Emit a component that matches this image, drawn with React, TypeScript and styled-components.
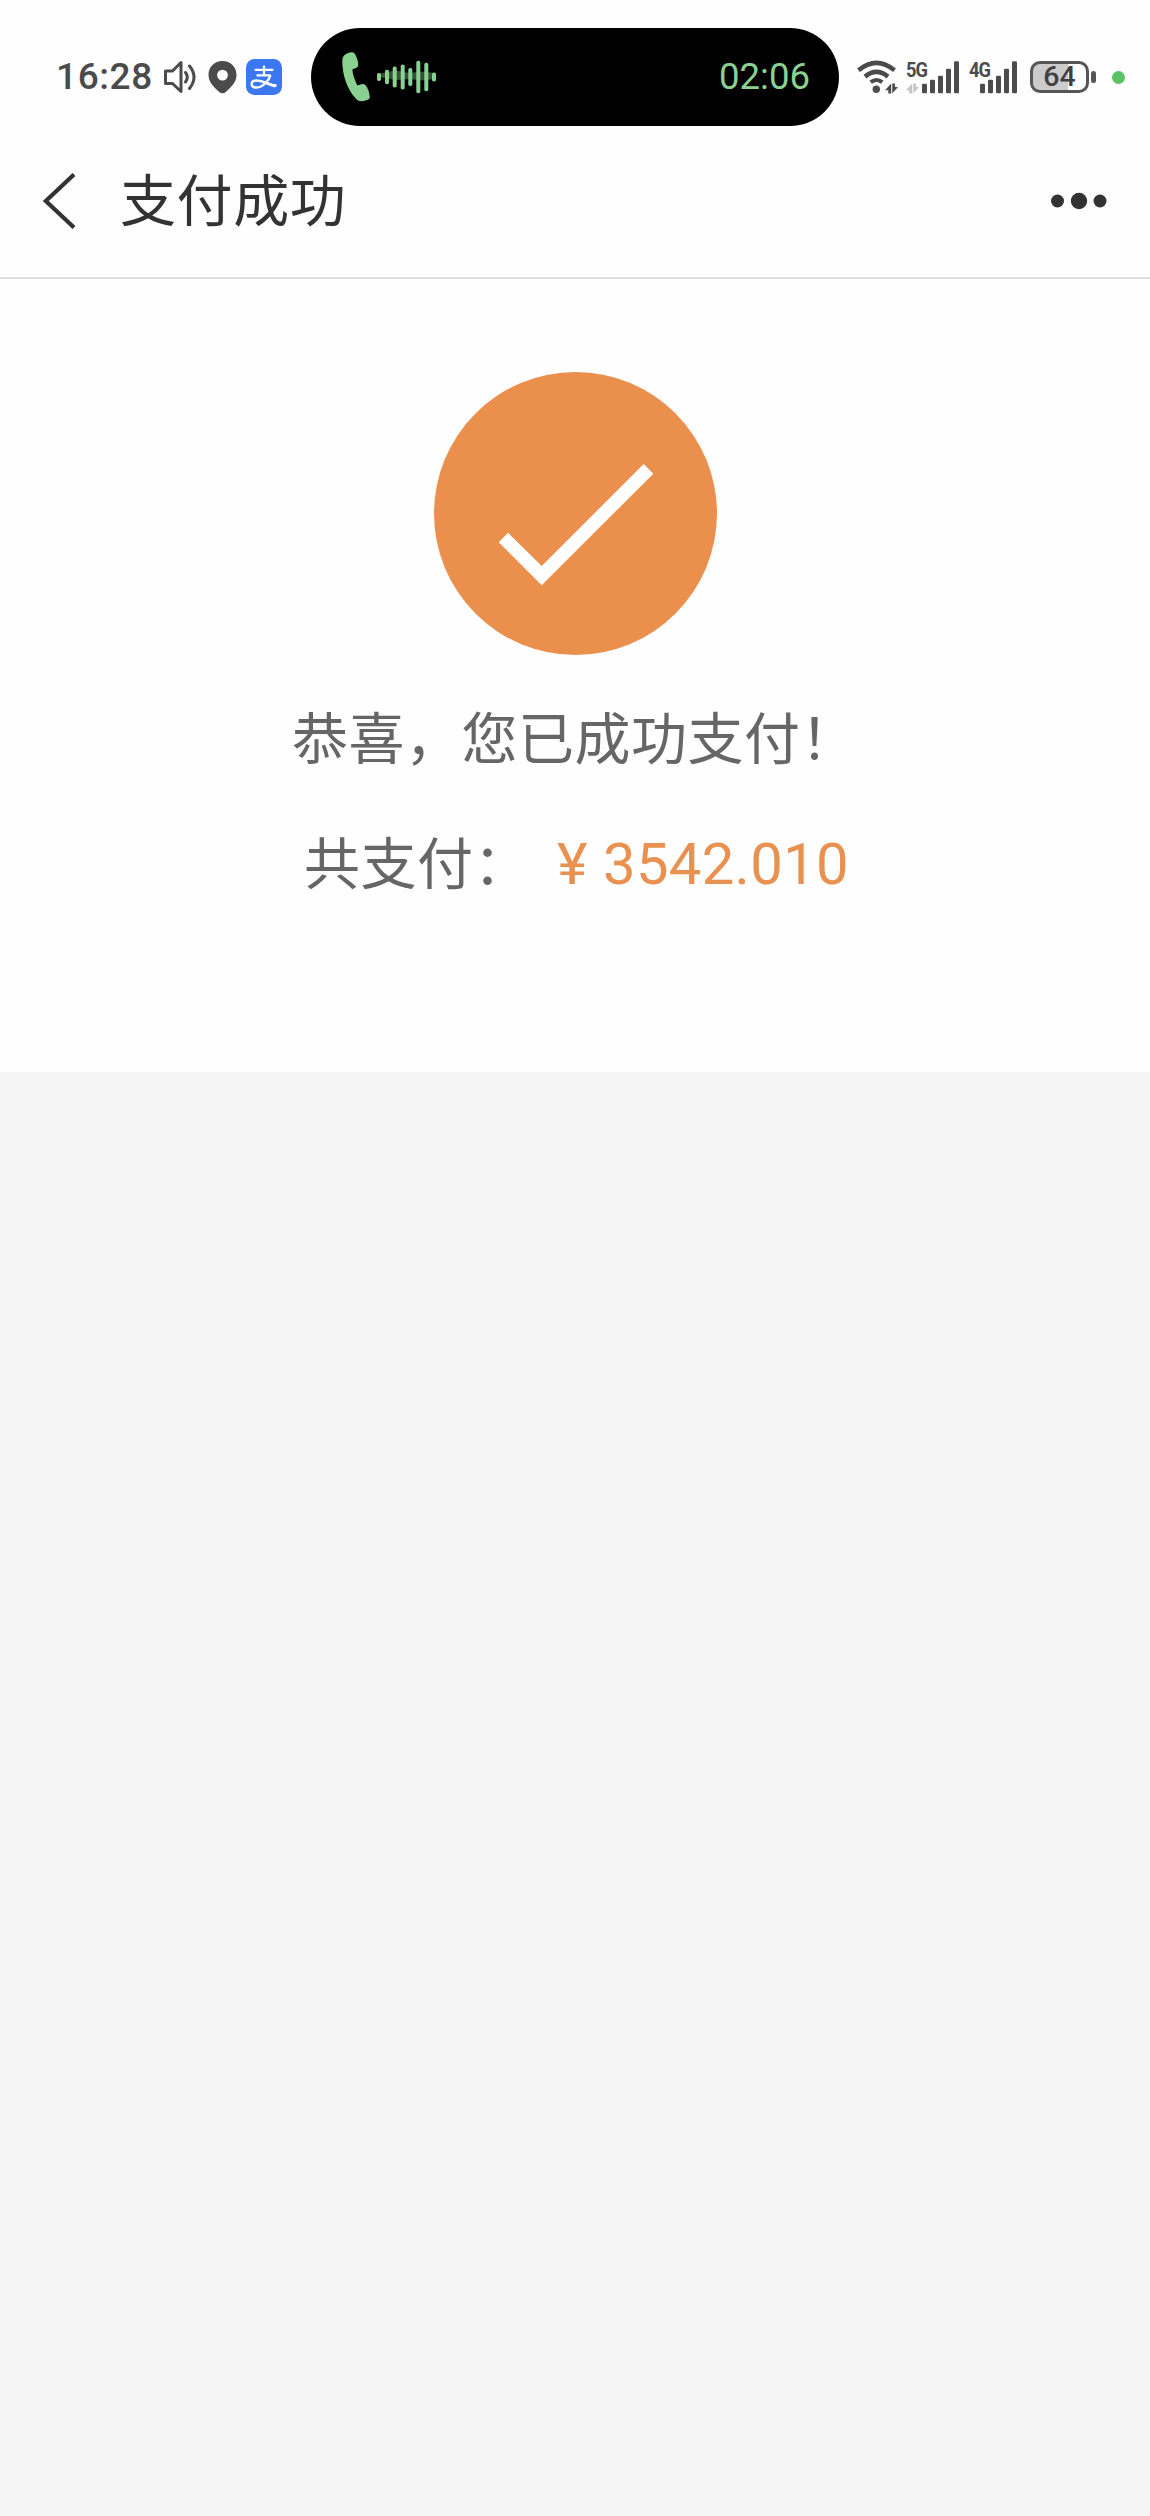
import React from "react";
import styled, { createGlobalStyle } from "styled-components";

const GlobalStyle = createGlobalStyle`
  * { box-sizing: border-box; }
  html, body { margin: 0; padding: 0; background: #f5f5f5; }
  body { font-family: Roboto, "Noto Sans CJK SC", sans-serif; }
  svg { display: block; flex: none; }
`;

const Page = styled.div`
  width: 1150px;
  height: 2516px;
  display: flex;
  flex-direction: column;
  background: #f5f5f5;
  overflow: hidden;
`;

const StatusBar = styled.div`
  display: flex;
  align-items: center;
  height: 154px;
  background: #fefefe;
  color: #4b4b4b;
`;

const StatusLeft = styled.div`
  display: flex;
  align-items: center;
  width: 311px;
  padding-left: 56px;
`;

const Clock = styled.span`
  width: 107px;
  font-size: 37px;
  line-height: 40px;
  font-weight: 500;
  letter-spacing: 0.6px;
  white-space: nowrap;
`;

const Island = styled.div`
  display: flex;
  align-items: center;
  width: 528px;
  height: 98px;
  padding: 0 29px 0 31px;
  border-radius: 49px;
  background: #000;
  color: #8ad191;
`;

const CallTime = styled.span`
  margin-left: auto;
  font-size: 36.5px;
  line-height: 40px;
  white-space: nowrap;
`;

const StatusRight = styled.div`
  display: flex;
  align-items: center;
  padding-left: 18px;
`;

const Spacer = styled.div<{ $w: number }>`
  flex: none;
  width: ${(p) => p.$w}px;
`;

const Signal = styled.div<{ $w: number }>`
  display: grid;
  width: ${(p) => p.$w}px;
  height: 34px;
  > * { grid-area: 1 / 1; }
`;

const Network = styled.span`
  font-size: 21px;
  line-height: 20px;
  font-weight: 700;
  letter-spacing: -1px;
  transform: scaleX(0.87);
  transform-origin: left;
  justify-self: start;
`;

const Battery = styled.div`
  display: flex;
  align-items: center;
  justify-content: center;
  width: 59px;
  height: 32px;
  border: 3px solid #555;
  border-radius: 10px;
  background: linear-gradient(90deg, #cbcbcb 35px, #fefefe 35px);
  font-size: 28.5px;
  font-weight: 500;
  line-height: 28px;
  color: #404040;
`;

const BatteryTip = styled.div`
  width: 5px;
  height: 12px;
  margin-left: 2px;
  border-radius: 2.5px;
  background: #555;
`;

const PrivacyDot = styled.div`
  width: 13px;
  height: 13px;
  border-radius: 50%;
  background: #5bc163;
`;

const Header = styled.header`
  display: flex;
  align-items: center;
  height: 125px;
  padding: 0 43px 29px 42px;
  border-bottom: 2px solid #e0e0e0;
  background: #fefefe;
  color: #333;
`;

const Title = styled.h1`
  margin: 0 auto 9px 42px;
  font-family: "Noto Sans CJK SC", sans-serif;
  font-size: 56px;
  line-height: 60px;
  font-weight: 400;
  letter-spacing: 0.6px;
`;

const Result = styled.main`
  display: flex;
  flex-direction: column;
  align-items: flex-start;
  height: 793px;
  padding-top: 93px;
  background: #fefefe;
  color: #666;
  font-family: "Noto Sans CJK SC", sans-serif;
  font-size: 56px;
  line-height: 80px;
`;

const CheckMark = styled.svg`
  margin-left: 434px;
`;

const Message = styled.p`
  margin: 40px 0 0 292px;
  letter-spacing: 0.5px;
  white-space: nowrap;
`;

const Total = styled.div`
  display: flex;
  align-items: baseline;
  margin: 45px 0 0 304px;
  white-space: nowrap;
`;

const TotalLabel = styled.span`
  width: 253px;
  letter-spacing: 0.5px;
`;

const Amount = styled.span`
  display: flex;
  color: #e89150;
  font-family: Roboto, sans-serif;
  font-size: 58px;
  letter-spacing: 0.3px;
`;

const Currency = styled.span`
  width: 46px;
`;

const wave = [
  [2, 8], [10, 14.5], [17.7, 21], [25.7, 25], [33.3, 18], [41.3, 32.5], [49.3, 28.5], [57, 9],
];

const bars = [
  [0, 9.5], [8, 13.5], [16, 17.5], [24, 24.5], [32, 32],
];

const SpeakerIcon = () => (
  <svg width="34" height="36" viewBox="0 0 34 36" fill="none" stroke="#4b4b4b" strokeWidth="3" strokeLinecap="round" strokeLinejoin="round">
    <path d="M2.500 12h7l8.500-8.500v29L9.500 24.500h-7z" />
    <path d="M22.500 13.500q3.600 4.500 0 9.500" />
    <path d="M26.500 7q9 11 0 22.500" />
  </svg>
);

const PinIcon = () => (
  <svg width="29" height="34" viewBox="0 0 29 34">
    <path fillRule="evenodd" fill="#4b4b4b" d="M14.500 1C6.500 1 .5 7 .5 14.700c0 7.500 5.500 12.500 10.500 17q3.500 3 7 0c5-4.500 10.500-9.500 10.500-17C28.500 7 22.500 1 14.500 1zm0 8.700a5.400 5.400 0 1 1 0 10.800 5.400 5.400 0 0 1 0-10.800z" />
  </svg>
);

const AlipayIcon = () => (
  <svg width="36" height="36" viewBox="0 0 36 36" fill="none" stroke="#fff">
    <rect width="36" height="36" rx="8.500" fill="#3b77f0" stroke="none" />
    <path d="M8.700 10.800h18.600M18 6.800v9.500M10.500 16.300h14.300" strokeWidth="2.200" />
    <path d="M24.500 16.300C22.500 22 17 28.500 10.500 28.500c-6.500 0-6.300-6.700-.5-7 6-.2 12 4 20.500 5.300" strokeWidth="2.300" />
    <path d="M22 23.500q4 1.600 8.500 2l-1.500 3q-4-.8-8.500-3z" fill="#fff" stroke="none" />
  </svg>
);

const PhoneIcon = () => (
  <svg width="28" height="50" viewBox="0 0 28 50" fill="#8ad191">
    <path d="M2 3.500Q5 .5 10 .3q2 0 3.300 2.200Q16.500 9 16.200 13.500q-.2 1.800-2.200 2.500l-3.500 1.300Q10 22 15.300 33.500l4-1.300q2.500-.7 4 .8Q27 37 27.800 45q0 2-2 2.800-3.800 1.700-8 1.300-2-.2-3.800-2.300C5 37 .3 23 .3 9Q.3 5.300 2 3.500z" />
  </svg>
);

const WaveIcon = () => (
  <svg width="60" height="34" viewBox="0 0 60 34" fill="#8ad191">
    <path d="M0 14.500l10-2.500 9-1.500 8 1.500 7 1 8-1.500 9 .5 8 1.500v5l-8 1.500-9 .5-8-1.500-7 .5-8 .5-9-1.500-10-2z" opacity=".38" />
    {wave.map(([x, h]) => (
      <rect key={x} x={x - 2} y={17 - h / 2} width="4" height={h} rx="1.800" />
    ))}
  </svg>
);

const Transfer = ({ color }: { color: string }) => (
  <path fill={color} d="M0 6.700L6.200 0v10H3.300V6.700zM7.300 0h2.700v3.500h3L7.300 10z" />
);

const WifiIcon = () => (
  <svg width="42" height="34" viewBox="0 0 42 34" fill="none" stroke="#4b4b4b" strokeWidth="4.600">
    <path d="M1.500 10.300Q19.500-4.600 37.500 10.300" />
    <path d="M8 16.600q11.500-9.400 23 0" />
    <path d="M13.700 22.200q5.800-4.400 11.600 0" strokeWidth="4" />
    <circle cx="19.300" cy="29.300" r="3.700" fill="#4b4b4b" stroke="none" />
    <g transform="translate(28 23.500)" stroke="none"><Transfer color="#4b4b4b" /></g>
  </svg>
);

const SignalBars = ({ offset, transfer }: { offset: number; transfer?: boolean }) => (
  <svg width={offset + 37} height="34" viewBox={`0 0 ${offset + 37} 34`}>
    {transfer && <g transform="translate(0 23.500)"><Transfer color="#c4c4c4" /></g>}
    {bars.map(([x, h]) => (
      <rect key={x} x={offset + x} y={33.200 - h} width="5" height={h} rx="1.300" fill="#4b4b4b" />
    ))}
  </svg>
);

const BackIcon = () => (
  <svg width="36" height="56" viewBox="0 0 36 56" fill="none" stroke="#333" strokeWidth="4.200">
    <path d="M32 1.500L3.800 28 32 54.500" />
  </svg>
);

const MoreIcon = () => (
  <svg width="56" height="18" viewBox="0 0 56 18" fill="#333">
    <circle cx="6.500" cy="9" r="6.500" />
    <circle cx="28" cy="9" r="8.200" />
    <circle cx="49" cy="9" r="6.500" />
  </svg>
);

export default function App() {
  return (
    <Page>
      <GlobalStyle />
      <StatusBar>
        <StatusLeft>
          <Clock>16:28</Clock>
          <SpeakerIcon />
          <Spacer $w={11} />
          <PinIcon />
          <Spacer $w={9} />
          <AlipayIcon />
        </StatusLeft>
        <Island>
          <PhoneIcon />
          <Spacer $w={7} />
          <WaveIcon />
          <CallTime>02:06</CallTime>
        </Island>
        <StatusRight>
          <WifiIcon />
          <Spacer $w={7} />
          <Signal $w={63}>
            <SignalBars offset={16} transfer />
            <Network>5G</Network>
          </Signal>
          <Signal $w={61}>
            <SignalBars offset={11} />
            <Network>4G</Network>
          </Signal>
          <Battery>64</Battery>
          <BatteryTip />
          <Spacer $w={16} />
          <PrivacyDot />
        </StatusRight>
      </StatusBar>
      <Header>
        <BackIcon />
        <Title>支付成功</Title>
        <MoreIcon />
      </Header>
      <Result>
        <CheckMark width="283" height="283" viewBox="0 0 283 283">
          <circle cx="141.500" cy="141.500" r="141.500" fill="#eb8f4d" />
          <path fill="#fff" d="M64.700 170.300l9.300-9.600 33.700 33.300L209.700 92l9.600 9.700-111.600 111.600z" />
        </CheckMark>
        <Message>恭喜，您已成功支付！</Message>
        <Total>
          <TotalLabel>共支付：</TotalLabel>
          <Amount>
            <Currency>¥</Currency>
            <span>3542.010</span>
          </Amount>
        </Total>
      </Result>
    </Page>
  );
}
